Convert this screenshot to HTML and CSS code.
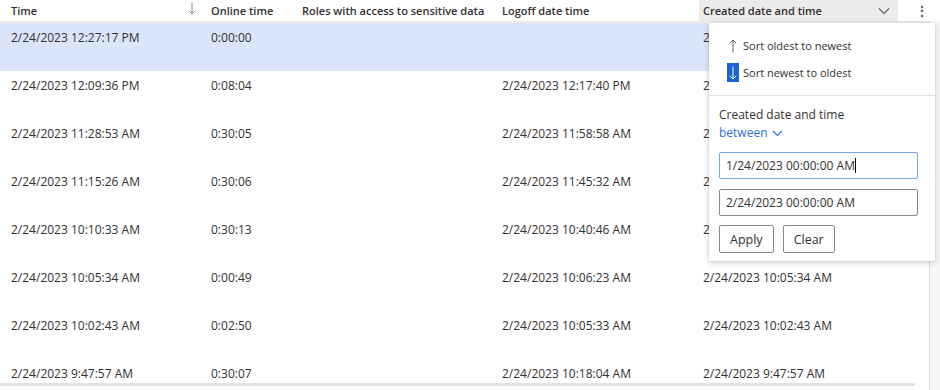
FILE: index.html
```html
<!DOCTYPE html>
<html lang="en">
<head>
  <meta charset="UTF-8">
  <title>Sign-in log</title>
  <link rel="stylesheet" href="styles.css">
</head>
<body>
  <div class="grid-wrap">
    <div class="grid">
      <div class="head-row">
        <div class="hcell">Time
          <svg class="sort-ic" width="8" height="13" viewBox="0 0 8 13"><path d="M4 0.5 V12 M0.8 8.8 L4 12 L7.2 8.8" fill="none" stroke="#8a8886" stroke-width="1"/></svg>
        </div>
        <div class="hcell">Online time</div>
        <div class="hcell">Roles with access to sensitive data</div>
        <div class="hcell">Logoff date time</div>
        <div class="hcell created"><span>Created date and time</span>
          <svg class="chev" width="12" height="8" viewBox="0 0 12 8"><path d="M1 1.5 L6 6.5 L11 1.5" fill="none" stroke="#605e5c" stroke-width="1.1"/></svg>
        </div>
        <div class="hcell more">&#8942;</div>
      </div>

      <div class="rows">
        <div class="row selected">
          <div class="cell">2/24/2023 12:27:17 PM</div><div class="cell">0:00:00</div><div class="cell"></div><div class="cell"></div><div class="cell">2/24/2023 12:27:17 PM</div>
        </div>
        <div class="row">
          <div class="cell">2/24/2023 12:09:36 PM</div><div class="cell">0:08:04</div><div class="cell"></div><div class="cell">2/24/2023 12:17:40 PM</div><div class="cell">2/24/2023 12:09:36 PM</div>
        </div>
        <div class="row">
          <div class="cell">2/24/2023 11:28:53 AM</div><div class="cell">0:30:05</div><div class="cell"></div><div class="cell">2/24/2023 11:58:58 AM</div><div class="cell">2/24/2023 11:28:53 AM</div>
        </div>
        <div class="row">
          <div class="cell">2/24/2023 11:15:26 AM</div><div class="cell">0:30:06</div><div class="cell"></div><div class="cell">2/24/2023 11:45:32 AM</div><div class="cell">2/24/2023 11:15:26 AM</div>
        </div>
        <div class="row">
          <div class="cell">2/24/2023 10:10:33 AM</div><div class="cell">0:30:13</div><div class="cell"></div><div class="cell">2/24/2023 10:40:46 AM</div><div class="cell">2/24/2023 10:10:33 AM</div>
        </div>
        <div class="row">
          <div class="cell">2/24/2023 10:05:34 AM</div><div class="cell">0:00:49</div><div class="cell"></div><div class="cell">2/24/2023 10:06:23 AM</div><div class="cell">2/24/2023 10:05:34 AM</div>
        </div>
        <div class="row">
          <div class="cell">2/24/2023 10:02:43 AM</div><div class="cell">0:02:50</div><div class="cell"></div><div class="cell">2/24/2023 10:05:33 AM</div><div class="cell">2/24/2023 10:02:43 AM</div>
        </div>
        <div class="row">
          <div class="cell">2/24/2023 9:47:57 AM</div><div class="cell">0:30:07</div><div class="cell"></div><div class="cell">2/24/2023 10:18:04 AM</div><div class="cell">2/24/2023 9:47:57 AM</div>
        </div>
      </div>
      <div class="hthumb"></div>
    </div>
    <div class="vscroll"></div>
  </div>

  <div class="menu">
    <div class="menu-item">
      <span class="arrow"><svg width="8" height="14" viewBox="0 0 8 14"><path d="M4 13.5 V1 M0.8 4.2 L4 1 L7.2 4.2" fill="none" stroke="#605e5c" stroke-width="1"/></svg></span>
      Sort oldest to newest
    </div>
    <div class="menu-item">
      <span class="arrow active"><svg width="8" height="14" viewBox="0 0 8 14"><path d="M4 0.5 V13 M0.8 9.8 L4 13 L7.2 9.8" fill="none" stroke="#fff" stroke-width="1"/></svg></span>
      Sort newest to oldest
    </div>
    <div class="menu-sep"></div>
    <div class="filter">
      <div class="filter-title">Created date and time</div>
      <div class="filter-op">between
        <svg width="11" height="7" viewBox="0 0 11 7"><path d="M1 1 L5.5 5.5 L10 1" fill="none" stroke="#2f6fde" stroke-width="1.1"/></svg>
      </div>
      <div class="inp focus">1/24/2023 00:00:00 AM<span class="caret"></span></div>
      <div class="inp">2/24/2023 00:00:00 AM</div>
      <div class="btns">
        <button class="btn">Apply</button>
        <button class="btn">Clear</button>
      </div>
    </div>
  </div>
</body>
</html>
```

FILE: styles.css
```css
html, body {
  margin: 0;
  background: #fff;
}
body {
  font-family: "Open Sans", "Noto Sans", Arial, sans-serif;
  color: #323130;
  font-size: 12px;
  position: relative;
  width: 940px;
  height: 390px;
  overflow: hidden;
}
.grid-wrap {
  display: flex;
  height: 390px;
}
.grid {
  width: 929px;
}
.head-row, .row {
  display: grid;
  grid-template-columns: 200px 91px 200px 201px 206px 1fr;
}
.head-row {
  height: 21px;
  border-bottom: 2px solid #edebe9;
  font-size: 11px;
  font-weight: 600;
}
.hcell {
  padding-left: 11px;
  line-height: 21px;
  white-space: nowrap;
  position: relative;
}
.sort-ic {
  position: absolute;
  right: 4px;
  top: 2px;
}
.hcell.created {
  margin-left: 7px;
  padding-left: 4px;
  background: #edebe9;
  display: flex;
  justify-content: space-between;
  align-items: center;
  padding-right: 8px;
}
.hcell.more {
  padding-left: 17px;
  font-size: 14px;
  color: #605e5c;
}
.rows {
  height: 360px;
  overflow: hidden;
}
.row {
  height: 48px;
  font-size: 12px;
}
.row.selected {
  background: #dbe5f9;
}
.cell {
  padding-left: 11px;
  padding-top: 6px;
  white-space: nowrap;
}
.hthumb {
  width: 915px;
  height: 3px;
  background: #e4e2e0;
}
.vscroll {
  margin-top: 21px;
  width: 11px;
  border-left: 1px solid #e1dfdd;
  background: #f8f7f6;
}
.menu {
  position: absolute;
  left: 709px;
  top: 23px;
  width: 226px;
  height: 238px;
  background: #fff;
  box-shadow: 0 2px 6px rgba(0, 0, 0, 0.18), 0 0 2px rgba(0, 0, 0, 0.1);
  font-size: 11px;
  padding-top: 9px;
  box-sizing: border-box;
}
.menu-item {
  height: 27px;
  display: flex;
  align-items: center;
  padding-left: 18px;
  gap: 4px;
}
.arrow {
  display: flex;
  align-items: center;
  justify-content: center;
  width: 12px;
  height: 19px;
}
.arrow.active {
  background: #1a64d6;
}
.menu-sep {
  height: 1px;
  background: #e1dfdd;
  margin-top: 9px;
}
.filter {
  padding: 10px 17px 0 10px;
}
.filter-title {
  font-size: 12px;
  line-height: 18px;
}
.filter-op {
  color: #2f6fde;
  font-size: 12px;
  line-height: 18px;
  display: flex;
  align-items: center;
  gap: 4px;
}
.inp {
  margin-top: 10px;
  height: 27px;
  border: 1px solid #8a8886;
  border-radius: 2px;
  box-sizing: border-box;
  font-size: 12px;
  line-height: 25px;
  padding-left: 6px;
}
.inp.focus {
  border-color: #7aa3e8;
}
.caret {
  display: inline-block;
  width: 1px;
  height: 15px;
  background: #000;
  vertical-align: -3px;
}
.btns {
  display: flex;
  gap: 9px;
  margin-top: 9px;
}
.btn {
  font-family: inherit;
  font-size: 12.5px;
  color: #323130;
  background: #fff;
  border: 1px solid #8a8886;
  border-radius: 2px;
  height: 28px;
  padding: 0 10px;
}
```
